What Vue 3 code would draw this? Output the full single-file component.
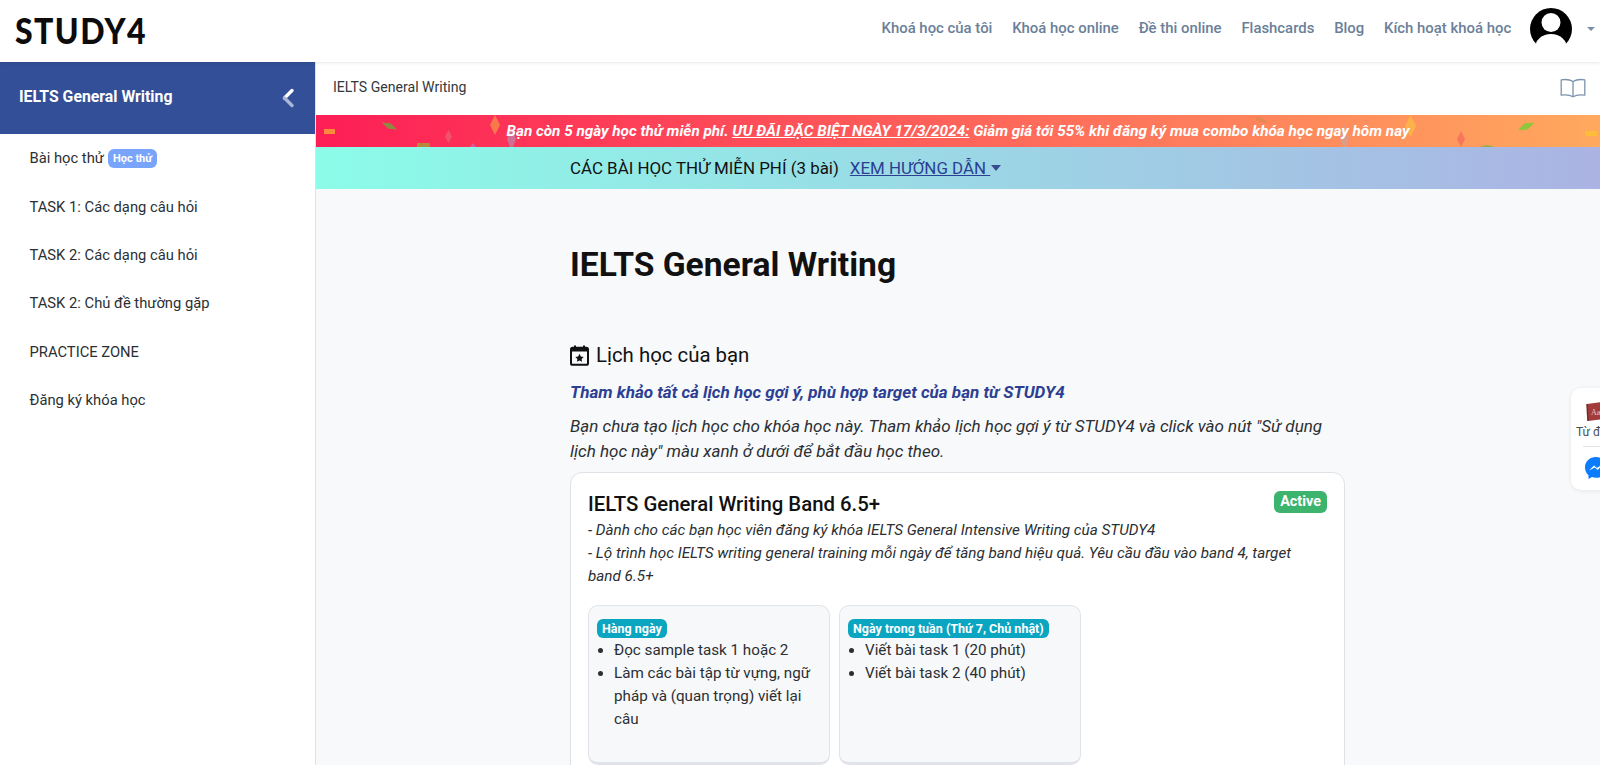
<script setup>
const navLinks = ['Khoá học của tôi', 'Khoá học online', 'Đề thi online', 'Flashcards', 'Blog', 'Kích hoạt khoá học']
const lessons = ['TASK 1: Các dạng câu hỏi', 'TASK 2: Các dạng câu hỏi', 'TASK 2: Chủ đề thường gặp', 'PRACTICE ZONE', 'Đăng ký khóa học']

// confetti trên banner khuyến mãi
const confetti = [
  { left: 8, top: 14, w: 11, h: 5, bg: '#f98a3c', r: 0, clip: false },
  { left: 65, top: 8, w: 17, h: 6, bg: '#8f8a42', r: 25, clip: true },
  { left: 101, top: 28, w: 13, h: 5, bg: '#b5893a', r: 0, clip: false },
  { left: 174, top: 0, w: 10, h: 20, bg: '#f9794a', r: 0, clip: true },
  { left: 129, top: 15, w: 7, h: 13, bg: '#f0536a', r: 0, clip: true },
  { left: 191, top: 12, w: 9, h: 24, bg: '#cf6f96', r: 0, clip: true },
  { left: 154, top: 28, w: 6, h: 8, bg: '#d2609a', r: 0, clip: true },
  { left: 937, top: 3, w: 16, h: 4, bg: '#e2894f', r: 20, clip: true },
  { left: 1089, top: 0, w: 11, h: 22, bg: '#fbb24a', r: 0, clip: true },
  { left: 1024, top: 10, w: 9, h: 26, bg: '#dc9c8c', r: 0, clip: true },
  { left: 1141, top: 16, w: 8, h: 16, bg: '#f9755e', r: 0, clip: true },
  { left: 1201, top: 8, w: 18, h: 7, bg: '#8fc63c', r: -25, clip: true },
  { left: 1164, top: 30, w: 14, h: 3, bg: '#9dab4a', r: 0, clip: true },
  { left: 1269, top: 16, w: 12, h: 5, bg: '#fdbc3a', r: 0, clip: false }
]

function pieceStyle(p) {
  return {
    left: p.left + 'px',
    top: p.top + 'px',
    width: p.w + 'px',
    height: p.h + 'px',
    background: p.bg,
    transform: `rotate(${p.r}deg)`,
    clipPath: p.clip ? 'polygon(50% 0, 100% 50%, 50% 100%, 0 50%)' : 'none'
  }
}
</script>

<template>
  <div class="page">
    <header class="topbar">
      <a class="logo">STUDY4</a>
      <nav class="nav">
        <a v-for="link in navLinks" :key="link" class="nav-link">{{ link }}</a>
        <div class="user">
          <svg class="avatar" viewBox="0 0 42 36">
            <defs>
              <clipPath id="avatar-clip"><circle cx="21" cy="21" r="21" /></clipPath>
            </defs>
            <g clip-path="url(#avatar-clip)">
              <rect width="42" height="36" fill="#000" />
              <circle cx="21" cy="14.5" r="9.5" fill="#fff" />
              <ellipse cx="21" cy="40" rx="16" ry="14" fill="#fff" />
            </g>
          </svg>
          <span class="user-caret"></span>
        </div>
      </nav>
    </header>

    <div class="body">
      <aside class="sidebar">
        <div class="side-head">
          <span class="side-name">IELTS General Writing</span>
          <svg class="side-back" viewBox="0 0 14 20" width="14" height="20">
            <path d="M11 2.5 L3.5 10" stroke="#fff" stroke-width="3.4" stroke-linecap="round" fill="none" />
            <path d="M3.5 10 L11 17.5" stroke="#aab6d6" stroke-width="3.4" stroke-linecap="round" fill="none" />
          </svg>
        </div>
        <ul class="side-list">
          <li class="side-item">Bài học thử <span class="trial">Học thử</span></li>
          <li v-for="item in lessons" :key="item" class="side-item">{{ item }}</li>
        </ul>
      </aside>

      <main class="main">
        <div class="crumb">
          <span class="crumb-text">IELTS General Writing</span>
          <svg width="26" height="20" viewBox="0 0 26 20" fill="none" stroke="#7c93ad" stroke-width="1.3" stroke-linejoin="round">
            <path d="M13 3.5 C10 1.6 5.5 1.2 1.2 1.8 V17.2 C5.5 16.6 10 17 13 18.8 C16 17 20.5 16.6 24.8 17.2 V1.8 C20.5 1.2 16 1.6 13 3.5 Z M13 3.5 V18.8" />
          </svg>
        </div>

        <div class="promo">
          <i v-for="(p, i) in confetti" :key="i" class="piece" :style="pieceStyle(p)"></i>
          <p class="promo-text">Bạn còn 5 ngày học thử miễn phí. <u>ƯU ĐÃI ĐẶC BIỆT NGÀY 17/3/2024:</u> Giảm giá tới 55% khi đăng ký mua combo khóa học ngay hôm nay</p>
        </div>

        <div class="trial-bar">
          <div class="wrap trial-inner">
            <span>CÁC BÀI HỌC THỬ MIỄN PHÍ (3 bài)</span>
            <a class="guide">XEM HƯỚNG DẪN </a>
            <span class="guide-caret"></span>
          </div>
        </div>

        <section class="wrap content">
          <h1 class="title">IELTS General Writing</h1>

          <h2 class="schedule-title">
            <svg width="19" height="21" viewBox="0 0 19 21">
              <path d="M5 .5 V4 M14 .5 V4" stroke="#111" stroke-width="2" fill="none" />
              <rect x="1" y="2.8" width="17" height="17" rx="1.6" fill="none" stroke="#111" stroke-width="2" />
              <path d="M1 3 H18 V6.5 H1Z" fill="#111" />
              <path d="M9.5 8.8 L10.8 11.5 L13.7 11.9 L11.6 13.9 L12.1 16.8 L9.5 15.4 L6.9 16.8 L7.4 13.9 L5.3 11.9 L8.2 11.5Z" fill="#111" />
            </svg>
            Lịch học của bạn
          </h2>
          <p class="suggest">Tham khảo tất cả lịch học gợi ý, phù hợp target của bạn từ STUDY4</p>
          <p class="note">Bạn chưa tạo lịch học cho khóa học này. Tham khảo lịch học gợi ý từ STUDY4 và click vào nút "Sử dụng lịch học này" màu xanh ở dưới để bắt đầu học theo.</p>

          <article class="plan">
            <div class="plan-head">
              <h3 class="plan-title">IELTS General Writing Band 6.5+</h3>
              <span class="active">Active</span>
            </div>
            <p class="plan-desc">- Dành cho các bạn học viên đăng ký khóa IELTS General Intensive Writing của STUDY4</p>
            <p class="plan-desc">- Lộ trình học IELTS writing general training mỗi ngày để tăng band hiệu quả. Yêu cầu đầu vào band 4, target band 6.5+</p>

            <div class="slots">
              <div class="slot">
                <span class="slot-tag">Hàng ngày</span>
                <ul>
                  <li>Đọc sample task 1 hoặc 2</li>
                  <li>Làm các bài tập từ vựng, ngữ pháp và (quan trọng) viết lại câu</li>
                </ul>
              </div>
              <div class="slot">
                <span class="slot-tag">Ngày trong tuần (Thứ 7, Chủ nhật)</span>
                <ul>
                  <li>Viết bài task 1 (20 phút)</li>
                  <li>Viết bài task 2 (40 phút)</li>
                </ul>
              </div>
            </div>
          </article>
        </section>

        <aside class="float">
          <svg class="dict" width="19" height="19" viewBox="0 0 19 19">
            <path d="M2 2 L17 0 L19 17 L3 19Z" fill="#a23b3b" />
            <path d="M2 2 L3 19" stroke="#7b2626" stroke-width="1.5" />
            <text x="6" y="13" font-size="8" fill="#e6c9c9" font-family="Liberation Serif, serif">Aa</text>
          </svg>
          <span class="dict-label">Từ điển</span>
          <hr class="float-line" />
          <svg class="msg" width="24" height="24" viewBox="0 0 24 24">
            <path d="M12 1 C5.7 1 1 5.5 1 11.5 C1 14.6 2.3 17.3 4.5 19.2 V23 L8 21.1 C9.3 21.6 10.6 21.8 12 21.8 C18.3 21.8 23 17.3 23 11.5 C23 5.5 18.3 1 12 1Z" fill="#0a7cff" />
            <path d="M5 14.5 L10 9.5 L13 12 L18.5 8.5 L13.8 14 L10.8 11.6Z" fill="#fff" />
          </svg>
        </aside>
      </main>
    </div>
  </div>
</template>

<style>
html, body {
  margin: 0;
  height: 100%;
  overflow: hidden;
}
</style>

<style scoped>
* {
  box-sizing: border-box;
}

.page {
  height: 765px;
  display: flex;
  flex-direction: column;
  overflow: hidden;
  font-family: Roboto, "Noto Sans", sans-serif;
  color: #212529;
  background: #f8f9fb;
}

/* thanh trên cùng */
.topbar {
  position: relative;
  z-index: 2;
  flex: 0 0 62px;
  display: flex;
  justify-content: space-between;
  align-items: center;
  padding: 0 5px 0 15px;
  background: #fff;
  box-shadow: 0 1px 3px rgba(0, 0, 0, .1);
}
.logo {
  margin-bottom: 2px;
  font-family: Lato, "Open Sans", sans-serif;
  font-size: 36px;
  font-weight: 900;
  letter-spacing: 1.6px;
  line-height: 40px;
  color: #0c0c0c;
  transform: scaleX(.89);
  transform-origin: left center;
}
.nav {
  display: flex;
  align-items: center;
  gap: 19.8px;
}
.nav-link {
  margin-bottom: 6px;
  font-size: 14.9px;
  font-weight: 500;
  color: #6b7f99;
}
.nav-link:nth-last-child(2) {
  margin-right: -1px;
}
.user {
  display: flex;
  align-items: center;
  gap: 15px;
}
.avatar {
  width: 42px;
  height: 36px;
  margin-top: -10px;
}
.user-caret {
  margin-bottom: 4px;
  border: 4.5px solid transparent;
  border-top: 4.5px solid #7c8ea6;
  border-bottom: 0;
}

.body {
  flex: 1;
  display: flex;
  min-height: 0;
}

/* sidebar */
.sidebar {
  flex: 0 0 316px;
  background: #fff;
  border-right: 1px solid #dee2e6;
}
.side-head {
  height: 72px;
  display: flex;
  justify-content: space-between;
  align-items: center;
  padding: 0 20px 0 19px;
  background: #334f97;
  color: #fff;
  font-size: 15.8px;
  font-weight: 700;
}
.side-name {
  margin-bottom: 4px;
}
.side-list {
  list-style: none;
  margin: 0;
  padding: 0;
}
.side-item {
  height: 48.4px;
  display: flex;
  align-items: center;
  gap: 4px;
  padding-left: 29.5px;
  font-size: 14.75px;
  color: #2b2f33;
}
.trial {
  padding: 3px 5px;
  border-radius: 6px;
  background: #78a5fb;
  color: #fff;
  font-size: 11px;
  font-weight: 700;
}

/* nội dung */
.main {
  position: relative;
  flex: 1;
  min-width: 0;
}
.crumb {
  height: 53px;
  display: flex;
  justify-content: space-between;
  align-items: center;
  padding: 0 14px 2px 17px;
  background: #fff;
  font-size: 14.1px;
  color: #33383d;
}
.crumb-text {
  margin-bottom: 2px;
}
.promo {
  position: relative;
  height: 32px;
  overflow: hidden;
  display: flex;
  justify-content: center;
  align-items: center;
  background: linear-gradient(90deg, #fd1e56, #ffa95e);
}
.piece {
  position: absolute;
}
.promo-text {
  position: relative;
  margin: 0;
  color: #fff;
  font-size: 15.3px;
  font-weight: 700;
  font-style: italic;
}
.trial-bar {
  height: 42px;
  display: flex;
  align-items: center;
  background: linear-gradient(90deg, #8bfce8, #abb3e3);
}
.wrap {
  width: 775px;
  margin-left: 254px;
}
.trial-inner {
  display: flex;
  align-items: center;
  font-size: 16.9px;
  color: #111;
  white-space: pre;
}
.guide {
  margin-left: 11px;
  color: #2c3f93;
  text-decoration: underline;
}
.guide-caret {
  margin-left: 1px;
  border: 5px solid transparent;
  border-top: 6px solid #3b4b8f;
  border-bottom: 0;
}

.content {
  padding-top: 54px;
}
.title {
  margin: 0 0 54px;
  font-size: 33.6px;
  line-height: 44px;
  font-weight: 700;
  color: #111;
}
.schedule-title {
  display: flex;
  align-items: center;
  gap: 7px;
  margin: 0 0 11px;
  font-size: 20.4px;
  line-height: 28px;
  font-weight: 400;
  color: #111;
}
.suggest {
  margin: 0 0 10px;
  font-size: 17.05px;
  line-height: 24px;
  font-weight: 700;
  font-style: italic;
  color: #2c3f93;
}
.note {
  margin: 0 0 9px;
  font-size: 17px;
  line-height: 24.5px;
  font-style: italic;
  color: #2b2f33;
}
.plan {
  padding: 16px 17px;
  border: 1px solid #dee2e6;
  border-radius: 12px;
  background: #fff;
  min-height: 320px;
}
.plan-head {
  display: flex;
  justify-content: space-between;
  align-items: flex-start;
  margin-bottom: 1px;
}
.plan-title {
  margin: 1px 0 0;
  font-size: 20.35px;
  line-height: 28px;
  font-weight: 500;
  color: #111;
}
.active {
  margin-top: 2px;
  padding: 1px 6px;
  border-radius: 6px;
  background: #3cb46e;
  color: #fff;
  font-size: 14.4px;
  line-height: 20px;
  font-weight: 700;
}
.plan-desc {
  margin: 0;
  padding-right: 10px;
  font-size: 15.25px;
  line-height: 22.8px;
  font-style: italic;
  color: #2b2f33;
}
.slots {
  display: flex;
  gap: 9px;
  margin-top: 18px;
}
.slot {
  width: 242px;
  height: 160px;
  padding: 13px 8px;
  border: 1px solid #e0e4e9;
  border-bottom-width: 3px;
  border-radius: 10px;
  background: #f7f8fa;
}
.slot-tag {
  display: block;
  width: fit-content;
  margin-bottom: 1px;
  padding: 0 5px;
  border-radius: 6px;
  background: #0aa5c0;
  color: #fff;
  font-size: 12.5px;
  line-height: 19px;
  font-weight: 700;
  white-space: nowrap;
}
.slot ul {
  margin: 0;
  padding-left: 17px;
  font-size: 15.2px;
  line-height: 22.8px;
  color: #2b2f33;
}

/* tiện ích nổi bên phải */
.float {
  position: absolute;
  top: 326px;
  left: 1255px;
  width: 60px;
  height: 102px;
  display: flex;
  flex-direction: column;
  align-items: flex-start;
  padding: 14px 0 0 5px;
  border-radius: 10px;
  background: #fff;
  box-shadow: 0 1px 5px rgba(0, 0, 0, .08);
}
.dict {
  margin-left: 9px;
}
.dict-label {
  margin-top: 4px;
  font-size: 12px;
  color: #4a4f55;
  white-space: nowrap;
}
.float-line {
  width: 36px;
  margin: 7px 0 0 7px;
  border: 0;
  border-top: 1px solid #e3e5e8;
}
.msg {
  margin: 9px 0 0 8px;
}
</style>
